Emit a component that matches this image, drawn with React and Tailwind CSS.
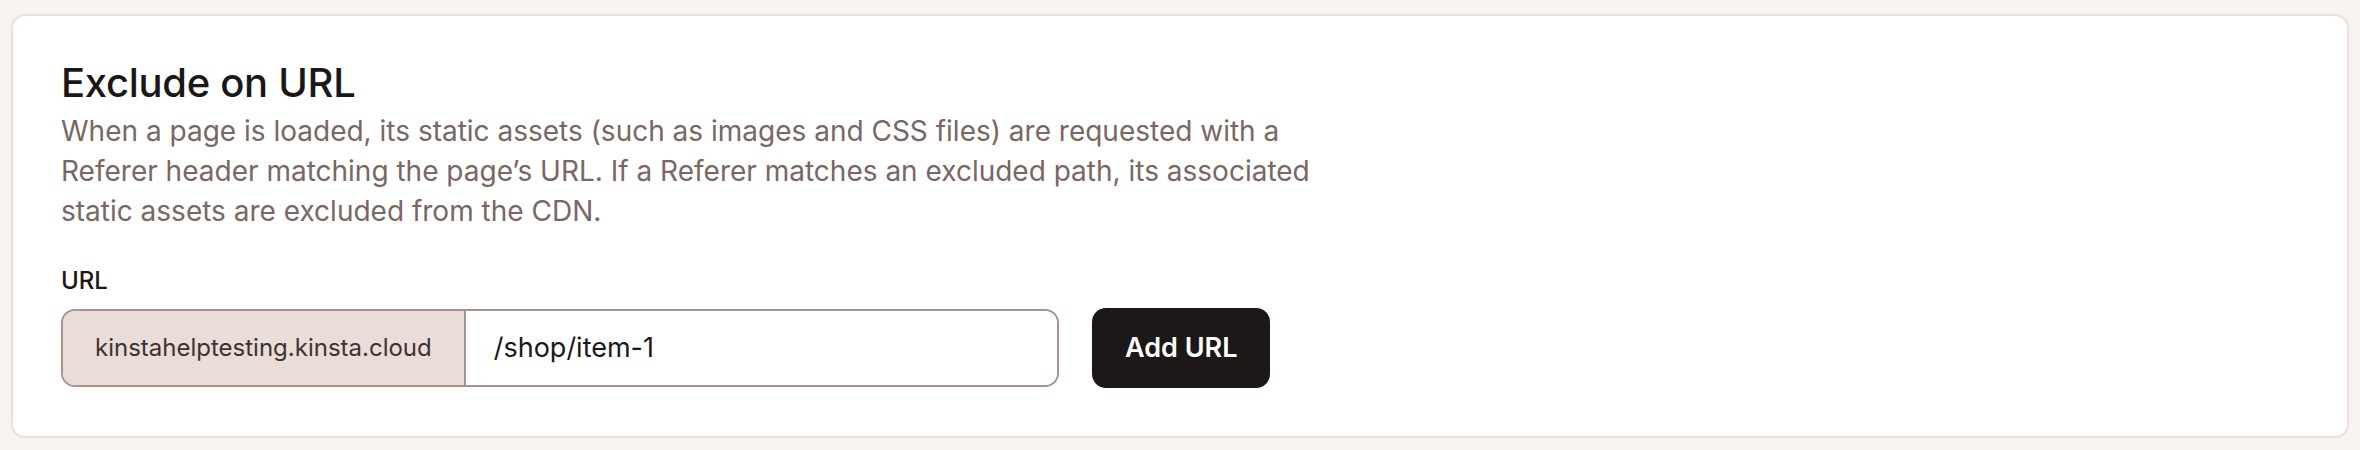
import { useState } from 'react';

const App = () => {
    const [path, setPath] = useState('/shop/item-1');

    return (
        <div className="min-h-screen bg-[#f7f3f0] px-[11px] pt-[14px] pb-[14px] font-['Inter',sans-serif]">
            <div className="bg-white border-2 border-[#ecdfd9] rounded-[14px] px-[48px] pt-[43px] pb-[48px]">
                <h2 className="text-[40px] leading-[48px] font-medium text-[#1c1717] tracking-[-0.3px]">
                    Exclude on URL
                </h2>
                <p className="mt-[4px] max-w-[1270px] text-[28px] leading-[40px] text-[#7a6662]">
                    When a page is loaded, its static assets (such as images and CSS files) are requested with a Referer header matching the page’s URL. If a Referer matches an excluded path, its associated static assets are excluded from the CDN.
                </p>

                <form onSubmit={(e) => e.preventDefault()} className="mt-[35px]">
                    <label className="block text-[24px] leading-[30px] font-medium text-[#1c1717] mb-[12px]">
                        URL
                    </label>
                    <div className="flex items-center gap-[33px]">
                        <div className="flex w-[998px] h-[78px] border-2 border-[#a8928b] rounded-[14px] overflow-hidden">
                            <span className="flex items-center px-[32px] bg-[#eaddd7] border-r-2 border-[#a8928b] text-[24px] text-[#3b3233]">
                                kinstahelptesting.kinsta.cloud
                            </span>
                            <input
                                type="text"
                                value={path}
                                onChange={(e) => setPath(e.target.value)}
                                className="flex-1 min-w-0 px-[28px] text-[27px] text-[#1c1717] outline-none bg-white"
                            />
                        </div>
                        <button
                            type="submit"
                            className="h-[80px] px-[33px] rounded-[14px] bg-[#1c1818] text-white text-[27px] font-semibold"
                        >
                            Add URL
                        </button>
                    </div>
                </form>
            </div>
        </div>
    );
};

export default App;
